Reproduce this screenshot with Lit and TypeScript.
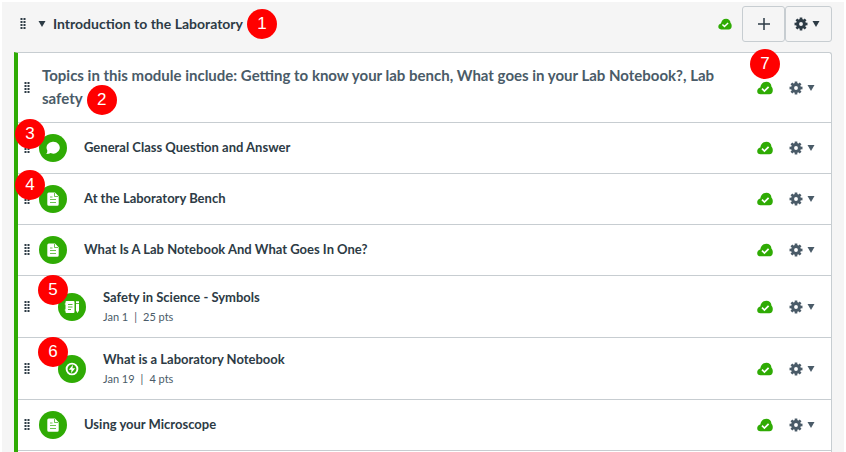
import { LitElement, html, css, svg, nothing } from "lit";
import { customElement } from "lit/decorators.js";

type Kind = "discussion" | "page" | "assignment" | "quiz";

interface Item {
  kind: Kind;
  title: string;
  due?: string;
  points?: string;
  callout?: number;
}

const ITEMS: Item[] = [
  { kind: "discussion", title: "General Class Question and Answer", callout: 3 },
  { kind: "page", title: "At the Laboratory Bench", callout: 4 },
  { kind: "page", title: "What Is A Lab Notebook And What Goes In One?" },
  { kind: "assignment", title: "Safety in Science - Symbols", due: "Jan 1", points: "25 pts", callout: 5 },
  { kind: "quiz", title: "What is a Laboratory Notebook", due: "Jan 19", points: "4 pts", callout: 6 },
  { kind: "page", title: "Using your Microscope" },
];

const GLYPHS = {
  discussion: svg`<path fill="#fff" d="M8.500 1.800a6.300 5.900 0 1 1-2.800 11.200Q4 14 1.200 14q1.300-1.500 1.100-3.600A6.300 5.900 0 0 1 8.500 1.800z"/>`,
  page: svg`<path fill="#fff" d="M3.800 1.500h6.200l3.700 3.700v8q0 1.500-1.500 1.500h-8.400q-1.500 0-1.500-1.500v-10.200q0-1.500 1.500-1.500z"/>
    <path stroke="#2fab04" stroke-width=".7" fill="none" d="M9.500 2v3.500h3.500M5 6h2.500M5 8.500h6M5 11.500h6"/>`,
  assignment: svg`<path fill="#fff" d="M2.500 2h7q1 0 1 1v10q0 1-1 1h-7q-1 0-1-1v-1.500h-.7v-1h.7v-5h-.7v-1h.7v-1.500q0-1 1-1z"/>
    <path stroke="#2fab04" stroke-width=".8" fill="none" d="M4 5.500h4.500M4 8h4.500M4 10.500h3"/>
    <path fill="#fff" d="M12 5h3v6.500l-1.500 2.500-1.500-2.500zM12 2.200h3v2h-3z"/>`,
  quiz: svg`<circle cx="8" cy="8" r="5.400" stroke="#fff" stroke-width="1.900" fill="none"/>
    <path fill="#fff" d="M9 3.800 4.800 8.800h2.700L7 12.200l4.200-5H8.500z"/>`,
};

const handle = html`<svg class="handle" viewBox="0 0 6 12" aria-hidden="true">
  ${[0, 1, 2, 3].map((r) => [0, 1].map((c) =>
    svg`<rect x=${c * 3 + 0.5} y=${r * 3} width="2" height="2" fill="currentColor"/>`))}
</svg>`;

const cloud = html`<svg class="cloud" viewBox="0 0 16 14" role="img" aria-label="Published">
  <path fill="#2fab04" d="M3.500 13.300C1.300 13.300.2 12 .2 10.300c0-2 1-3.400 3.100-3.900C3.700 3.200 6 .8 9.300.8c2.900 0 5 1.900 5.200 4.900.9.800 1.300 2 1.300 3.500 0 2.600-1.300 4.100-3.500 4.100z"/>
  <path fill="none" stroke="#fff" stroke-width="1.700" d="m5 7.600 2.400 2.400 4.200-4.200"/>
</svg>`;

const gear = html`<svg class="gear" viewBox="-8 -8 16 16" aria-hidden="true">
  <circle r="3.900" fill="none" stroke="currentColor" stroke-width="3.400"/>
  ${[0, 45, 90, 135, 180, 225, 270, 315].map((a) =>
    svg`<rect x="-1.500" y="-7.400" width="3" height="3" fill="currentColor" transform="rotate(${a})"/>`)}
</svg>`;

const caret = html`<svg class="caret" viewBox="0 0 8 6" aria-hidden="true">
  <path fill="currentColor" d="M.5 0h7L4 6z"/>
</svg>`;

@customElement("app-root")
export class AppRoot extends LitElement {
  static styles = css`
    :host {
      display: flex;
      flex-direction: column;
      box-sizing: border-box;
      min-height: 100vh;
      border: 2px solid #fff;
      border-bottom: 0;
      background: #f5f5f5;
      color: #2d3b45;
      font-family: Lato, "Liberation Sans", sans-serif;
      font-size: 13px;
      line-height: 20px;
    }
    button {
      display: flex;
      align-items: center;
      justify-content: center;
      padding: 0;
      border: 0;
      background: none;
      color: inherit;
      font: inherit;
      cursor: pointer;
    }
    svg { display: block; flex: none; }
    h2, h3, p, ul { margin: 0; padding: 0; }
    header {
      display: flex;
      align-items: center;
      padding: 4px 12px 10px 18px;
    }
    header .toggle { width: 18px; height: 20px; margin: 0 2px 0 7px; }
    h2 { font-size: 14px; font-weight: 700; }
    .handle { width: 6px; height: 12px; }
    .cloud { width: 16px; height: 14px; }
    header .cloud { width: 14px; height: 12px; }
    .gear { width: 14px; height: 14px; }
    .caret { width: 8px; height: 6px; }
    .status { position: relative; margin-left: auto; }
    .bar-button {
      box-sizing: border-box;
      height: 36px;
      border: 1px solid #c7cdd1;
      border-radius: 3px;
    }
    .add { width: 43px; margin-left: 10px; }
    .settings { width: 47px; gap: 4px; padding-right: 3px; }
    .add svg { width: 14px; height: 14px; }
    ul {
      flex: 1;
      margin: 0 12px;
      list-style: none;
      background: #fff;
      border: solid #c7cdd1;
      border-width: 1px 1px 0 0;
      border-left: 4px solid #2fab04;
      border-radius: 0 3px 0 0;
    }
    li {
      display: flex;
      align-items: center;
      box-sizing: border-box;
      min-height: 51px;
      padding: 0 16px 0 6px;
      border-bottom: 1px solid #c7cdd1;
    }
    li.text { min-height: 70px; }
    li.detailed { min-height: 62px; }
    h3 {
      flex: 1;
      margin: 0 24px 0 12px;
      padding-bottom: 2px;
      font-size: 15px;
      line-height: 23px;
      font-weight: 700;
      color: #4a5b68;
    }
    .icon {
      position: relative;
      display: flex;
      align-items: center;
      justify-content: center;
      width: 28px;
      height: 28px;
      margin: 0 17px 0 9px;
      border-radius: 50%;
      background: #2fab04;
    }
    .icon svg { width: 16px; height: 16px; }
    .detailed .icon { margin-left: 28px; }
    .body { padding-bottom: 2px; }
    a { color: inherit; font-weight: 700; text-decoration: none; }
    .meta { display: flex; gap: 6px; margin-top: 2px; font-size: 11px; line-height: 16px; color: #4a5b68; }
    .menu { gap: 4px; height: 24px; margin-left: 16px; color: #4a5b68; }
    .badge {
      display: flex;
      align-items: center;
      justify-content: center;
      width: 30px;
      height: 30px;
      border-radius: 50%;
      background: #f00;
      color: #fff;
      font: 17px/30px "Liberation Sans", sans-serif;
    }
    header .badge { margin-left: 4px; }
    h3 .badge { display: inline-flex; margin: -8px 0 -8px 4px; vertical-align: middle; }
    .icon .badge { position: absolute; left: -24px; top: -15px; }
    .detailed .icon .badge { left: -20px; top: -18px; }
    .status .badge { position: absolute; left: -7px; top: -32px; }
  `;

  private badge(n: number) {
    return html`<span class="badge">${n}</span>`;
  }

  private controls(title: string, callout?: number) {
    return html`
      <span class="status">${cloud}${callout ? this.badge(callout) : nothing}</span>
      <button class="menu" aria-label="Settings for ${title}">${gear}${caret}</button>`;
  }

  private row(item: Item) {
    return html`<li class=${item.due ? "detailed" : ""}>
      ${handle}
      <span class="icon">
        <svg viewBox="0 0 16 16" aria-hidden="true">${GLYPHS[item.kind]}</svg>
        ${item.callout ? this.badge(item.callout) : nothing}
      </span>
      <div class="body">
        <a href="#">${item.title}</a>
        ${item.due
          ? html`<p class="meta"><span>${item.due}</span><span>|</span><span>${item.points}</span></p>`
          : nothing}
      </div>
      ${this.controls(item.title)}
    </li>`;
  }

  render() {
    return html`
      <header>
        ${handle}
        <button class="toggle" aria-label="Collapse module" aria-expanded="true">${caret}</button>
        <h2>Introduction to the Laboratory</h2>
        ${this.badge(1)}
        <span class="status">${cloud}</span>
        <button class="bar-button add" aria-label="Add item">
          <svg viewBox="0 0 14 14" aria-hidden="true"><path stroke="currentColor" stroke-width="1.500" d="M7 1v12M1 7h12"/></svg>
        </button>
        <button class="bar-button settings" aria-label="Module settings">${gear}${caret}</button>
      </header>
      <ul>
        <li class="text">
          ${handle}
          <h3>Topics in this module include: Getting to know your lab bench, What goes in your Lab Notebook?, Lab safety${this.badge(2)}</h3>
          ${this.controls("Topics in this module", 7)}
        </li>
        ${ITEMS.map((item) => this.row(item))}
      </ul>`;
  }
}
